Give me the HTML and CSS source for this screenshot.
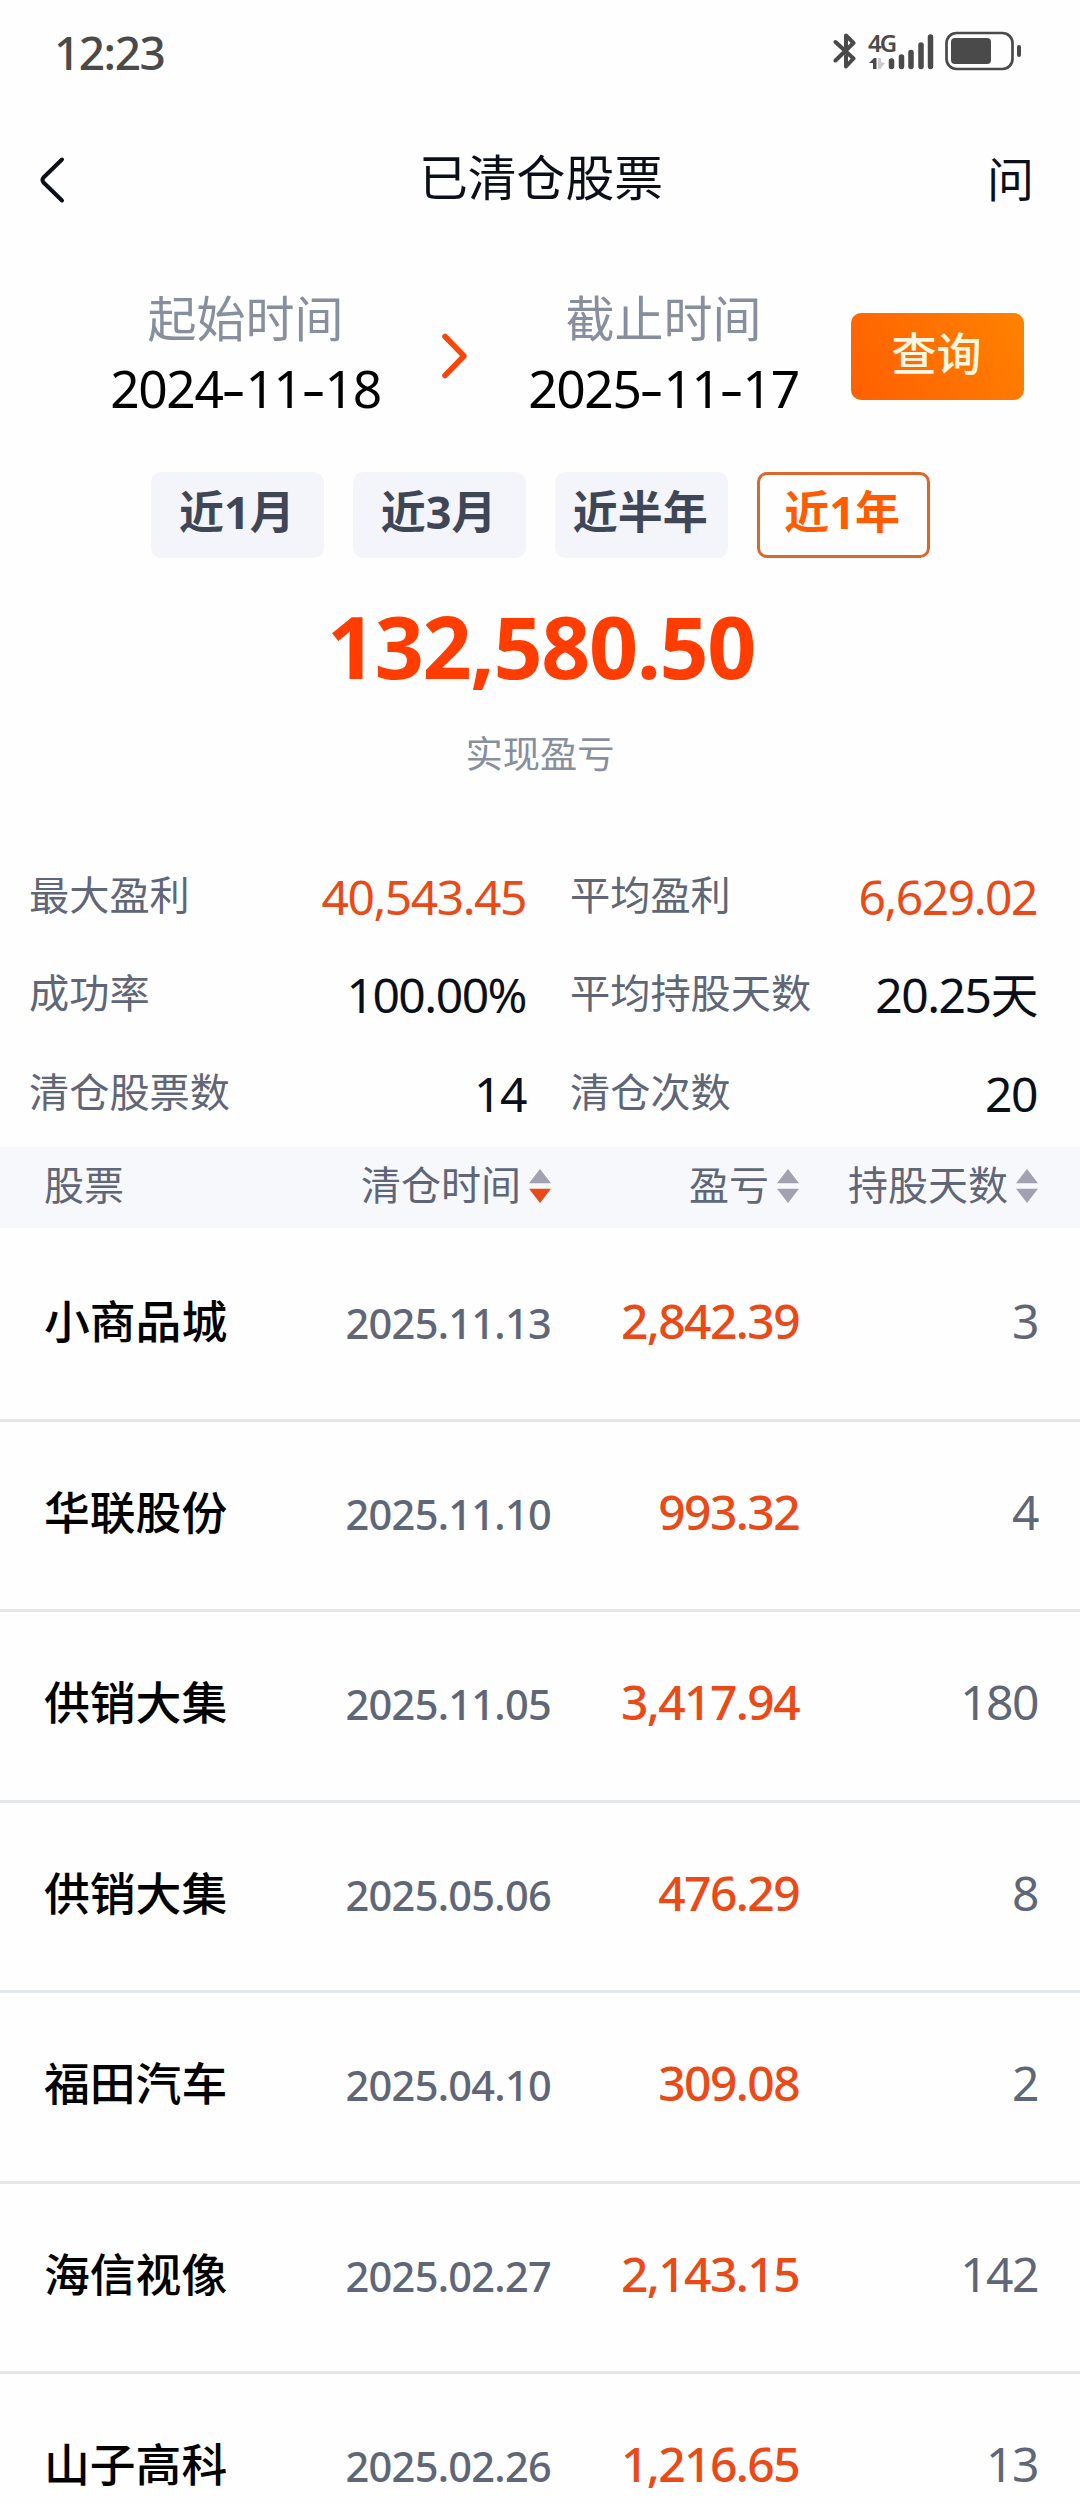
FILE: index.html
```html
<!DOCTYPE html>
<html lang="zh-CN">
<head>
    <meta charset="UTF-8">
    <meta name="viewport" content="width=device-width, initial-scale=1.0">
    <title>已清仓股票</title>
    <link rel="stylesheet" href="styles.css">
</head>
<body>
    <div class="status-bar">
        <span class="clock">12:23</span>
        <div class="status-icons">
            <svg class="bluetooth" width="24" height="38" viewBox="0 0 24 38">
                <path d="M2.500 10 L20.500 26.500 L13 34.500 V24 M2.500 28.500 L20.500 11 L13 3.500 V16" />
            </svg>
            <div class="signal">
                <span class="net">4G</span>
                <svg width="66" height="38" viewBox="0 0 66 38">
                    <path class="up" d="M0 30 L5 25 H7.500 V36 H4 V30 Z" />
                    <path class="down" d="M9 25 H12 L12 29 L16 30 L11.500 36 H9 Z" />
                    <path class="bars" d="M22.500 28 V33.500 M32.500 24 V33.500 M42 19.500 V33.500 M52 12 V33.500 M61.500 4 V33.500" />
                </svg>
            </div>
            <svg class="battery" width="77" height="40" viewBox="0 0 77 40">
                <rect class="case" x="1.500" y="2" width="66" height="36" rx="10" />
                <rect class="level" x="6" y="7" width="40" height="26" rx="4" />
                <rect class="level" x="72" y="14" width="4" height="12" rx="2" />
            </svg>
        </div>
    </div>
    <header>
        <svg class="back" width="30" height="50" viewBox="0 0 30 50">
            <path d="M26 4.500 L7.500 22.500 Q5.500 25 7.500 27.500 L26 45.500" />
        </svg>
        <h1>已清仓股票</h1>
        <a class="ask">问</a>
    </header>
    <section class="range">
        <div class="date">
            <label>起始时间</label>
            <span class="num">2024<i>-</i>11<i>-</i>18</span>
        </div>
        <svg class="arrow" width="28" height="48" viewBox="0 0 28 48">
            <path d="M4 4.500 L23 24 L4 43.500" />
        </svg>
        <div class="date">
            <label>截止时间</label>
            <span class="num">2025<i>-</i>11<i>-</i>17</span>
        </div>
        <button>查询</button>
    </section>
    <nav>
        <a>近1月</a>
        <a>近3月</a>
        <a>近半年</a>
        <a class="active">近1年</a>
    </nav>
    <section class="total">
        <strong>132,580.50</strong>
        <p>实现盈亏</p>
    </section>
    <section class="stats">
        <div><label>最大盈利</label><span class="num red">40,543.45</span></div>
        <div><label>平均盈利</label><span class="num red">6,629.02</span></div>
        <div><label>成功率</label><span class="num">100.00%</span></div>
        <div><label>平均持股天数</label><span class="num">20.25天</span></div>
        <div><label>清仓股票数</label><span class="num">14</span></div>
        <div><label>清仓次数</label><span class="num">20</span></div>
    </section>
    <main>
        <div class="row head">
            <span>股票</span>
            <span>清仓时间<i class="sort desc"></i></span>
            <span>盈亏<i class="sort"></i></span>
            <span>持股天数<i class="sort"></i></span>
        </div>
        <div class="list">
            <div class="row"><b>小商品城</b><time>2025.11.13</time><span class="num red">2,842.39</span><span class="num">3</span></div>
            <div class="row"><b>华联股份</b><time>2025.11.10</time><span class="num red">993.32</span><span class="num">4</span></div>
            <div class="row"><b>供销大集</b><time>2025.11.05</time><span class="num red">3,417.94</span><span class="num">180</span></div>
            <div class="row"><b>供销大集</b><time>2025.05.06</time><span class="num red">476.29</span><span class="num">8</span></div>
            <div class="row"><b>福田汽车</b><time>2025.04.10</time><span class="num red">309.08</span><span class="num">2</span></div>
            <div class="row"><b>海信视像</b><time>2025.02.27</time><span class="num red">2,143.15</span><span class="num">142</span></div>
            <div class="row"><b>山子高科</b><time>2025.02.26</time><span class="num red">1,216.65</span><span class="num">13</span></div>
        </div>
    </main>
</body>
</html>
```
FILE: styles.css
```css
* { box-sizing: border-box; }
body { margin: 0; height: 2504px; overflow: hidden; background: #fefefe; color: #0a0f1a; font-family: "Noto Sans", "Noto Sans CJK SC", sans-serif; }
svg { display: block; fill: none; stroke-linecap: round; stroke-linejoin: round; }
.num { font-size: 48px; letter-spacing: -1.5px; }

.status-bar { display: flex; justify-content: space-between; height: 102px; padding: 0 58px 0 54px; color: #4a4a4a; }
.clock { font-size: 46px; line-height: 104px; letter-spacing: -1.5px; font-weight: 500; }
.status-icons { display: flex; padding-top: 31px; }
.bluetooth { margin: 1px 12px 0 0; stroke: #4a4a4a; stroke-width: 4; }
.signal { position: relative; margin: 2px 10px 0 0; }
.net { position: absolute; left: -1px; top: -1px; font-size: 24px; line-height: 22px; font-weight: 600; letter-spacing: -2px; }
.bars { stroke: #4a4a4a; stroke-width: 5.5; }
.up { fill: #4a4a4a; }
.down { fill: #ccc; }
.case { stroke: #4a4a4a; stroke-width: 2.7; }
.level { fill: #4a4a4a; }

header { display: flex; justify-content: space-between; align-items: center; height: 156px; padding: 0 46px 0 36px; }
.back { stroke: #0a0f1a; stroke-width: 4; }
h1 { margin: 0; font-size: 48.8px; line-height: 60px; font-weight: 400; padding: 0 0 6px 29px; }
.ask { font-size: 47px; line-height: 60px; padding-bottom: 3px; }

.range { display: flex; height: 214px; padding: 25px 56px 0 110px; }
.date { width: 271px; display: flex; flex-direction: column; align-items: center; }
.date label { font-size: 49px; line-height: 70px; color: #878e9e; }
.date .num { font-size: 51.5px; line-height: 70px; white-space: nowrap; color: #000; letter-spacing: -1.4px; }
.date i { display: inline-block; width: 23px; font-style: normal; letter-spacing: 0; text-align: center; transform: scaleX(1.45); }
.arrow { margin: 49px 59px 0 60px; stroke: #fb4408; stroke-width: 5.5; }
button { width: 173px; height: 87px; margin: 30px 0 0 auto; padding: 0 2px 10px 0; border: 0; border-radius: 10px; background: linear-gradient(60deg, #ff5f00, #ff8200); color: #fff7e0; font: 500 45px "Noto Sans CJK SC", sans-serif; }

nav { display: flex; gap: 28.7px; justify-content: center; height: 86px; padding-left: 1px; }
nav a { width: 173px; height: 86px; line-height: 80px; padding-right: 2px; border-radius: 10px; background: #f4f5fa; color: #3f4656; font-size: 45px; font-weight: 700; text-align: center; }
nav .active { background: none; border: 3px solid #dc672a; line-height: 74px; color: #ff5c00; }

.total { text-align: center; height: 290px; padding-top: 38px; }
.total strong { display: block; font-size: 86px; line-height: 100px; letter-spacing: -1.4px; padding-left: 2px; color: #ff3d00; }
.total p { margin: 28px 0 0; font-size: 37.3px; line-height: 60px; color: #878e9e; }

.stats { display: grid; grid-template-columns: 497px 467px; column-gap: 44px; padding-left: 29px; height: 299px; grid-auto-rows: 98.3px; }
.stats div { display: flex; justify-content: space-between; line-height: 97px; }
.stats label { font-size: 40.2px; line-height: 94px; color: #5f6678; }
.red { color: #e94a17 !important; }

.row { display: grid; grid-template-columns: 250px 257px 248px 239px; padding-left: 44px; height: 190.5px; border-bottom: 3px solid #e4e7ea; line-height: 179px; align-items: baseline; text-align: right; }
.row > :first-child { text-align: left; }
.row b { font-size: 45.8px; font-weight: 500; color: #000; }
.row time { font-size: 41.5px; letter-spacing: -0.7px; font-weight: 500; color: #5f6678; }
.row .num { color: #5f6678; }
.row .red { font-weight: 500; letter-spacing: -1.6px; }
.head { height: 81px; line-height: 76px; border: 0; background: #f7f8fb; font-size: 40px; color: #5f6678; margin-bottom: 3px; }
.sort { display: inline-block; width: 22px; height: 34px; margin: 0 0 0 8px; vertical-align: -3px; background: #a0a2b2; clip-path: polygon(50% 0, 100% 42%, 0 42%, 0 58%, 100% 58%, 50% 100%, 0 58%, 0 42%); }
.desc { background: linear-gradient(#a0a2b2 50%, #e94a17 50%); }
```
